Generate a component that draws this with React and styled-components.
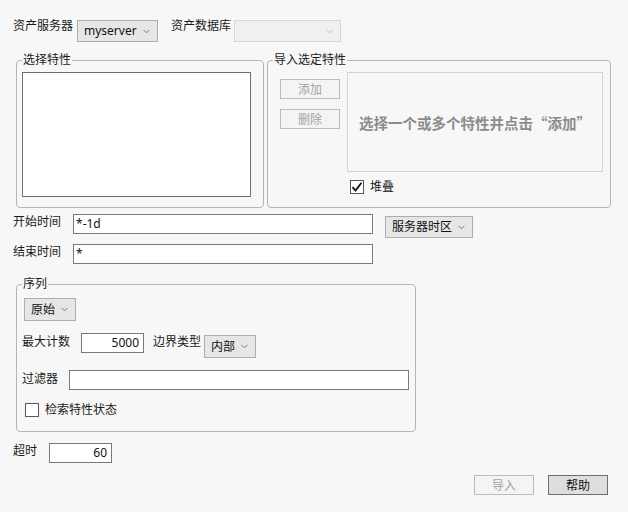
import styled, { createGlobalStyle, css } from "styled-components"

const Global = createGlobalStyle`
    body {
        margin: 0;
        background: #f7f7f7;
    }
`

const Page = styled.div`
    width: 628px;
    height: 512px;
    box-sizing: border-box;
    padding: 18px 0 0 13px;
    background: #f7f7f7;
    font-family: "Noto Sans", "Noto Sans CJK SC", sans-serif;
    font-size: 12px;
    color: #1a1a1a;
    display: flex;
    flex-direction: column;
`

const Row = styled.div`
    display: flex;
    align-items: ${(p) => (p.$stretch ? "stretch" : "flex-start")};
    margin-top: ${(p) => p.$mt || 0}px;
    margin-left: ${(p) => p.$ml || 0}px;
`

const Label = styled.span`
    line-height: 16px;
    white-space: nowrap;
    margin-top: ${(p) => p.$mt || 0}px;
    margin-right: ${(p) => p.$gap || 0}px;
`

const DropBox = styled.div`
    box-sizing: border-box;
    width: ${(p) => p.$w}px;
    height: ${(p) => p.$h || 22}px;
    margin-top: ${(p) => p.$mt || 0}px;
    margin-left: ${(p) => p.$ml || 0}px;
    padding: 0 7px 0 6px;
    display: flex;
    align-items: center;
    justify-content: space-between;
    border: 1px solid #adadad;
    background: #e6e6e6;
    color: #111;
    line-height: 16px;

    ${(p) => p.$disabled && css`
        border-color: #d6d6d6;
        background: #f0f0f0;
    `}
`

const Chevron = ({ color = "#7a7a7a" }) => (
    <svg width="7" height="5" viewBox="0 0 7 5">
        <path d="M0.5 0.8 L3.5 3.8 L6.5 0.8" fill="none" stroke={color} strokeWidth="1" />
    </svg>
)

const Dropdown = ({ text, disabled, ...rest }) => (
    <DropBox $disabled={disabled} {...rest}>
        <span>{text}</span>
        <Chevron color={disabled ? "#c4c4c4" : "#7a7a7a"} />
    </DropBox>
)

const Group = styled.fieldset`
    box-sizing: border-box;
    margin: 0;
    margin-left: ${(p) => p.$ml || 0}px;
    width: ${(p) => p.$w}px;
    border: 1px solid #b6b6b6;
    border-radius: 4px;
    padding: ${(p) => p.$pt || 4}px ${(p) => p.$pr || 5}px ${(p) => p.$pb || 10}px 5px;
    min-width: 0;

    > legend {
        padding: 0 1px;
        line-height: 16px;
        color: #1a1a1a;
    }
`

const ListBox = styled.div`
    box-sizing: border-box;
    width: 229px;
    height: 125px;
    background: #fff;
    border: 1px solid #6f6f6f;
`

const Field = styled.div`
    box-sizing: border-box;
    width: ${(p) => p.$w}px;
    height: 20px;
    background: #fff;
    border: 1px solid #7a7a7a;
    padding: 0 ${(p) => (p.$right ? 4 : 2)}px;
    text-align: ${(p) => (p.$right ? "right" : "left")};
    line-height: 17px;
    color: #111;
`

const SmallButton = styled.div`
    box-sizing: border-box;
    width: 60px;
    height: 20px;
    display: flex;
    align-items: center;
    justify-content: center;
    border: 1px solid #bdbdbd;
    background: #f4f4f4;
    color: #a3a3a3;

    ${(p) => p.$primary && css`
        border-color: #6e6e6e;
        background: #dedede;
        color: #111;
    `}
`

const ButtonColumn = styled.div`
    display: flex;
    flex-direction: column;
    gap: 10px;
    margin: 7px 7px 0 7px;
`

const RightColumn = styled.div`
    display: flex;
    flex-direction: column;
`

const InfoBox = styled.div`
    box-sizing: border-box;
    width: 256px;
    height: 100px;
    border: 1px solid #d3d3d3;
    display: flex;
    align-items: center;
    justify-content: center;
    font-size: 14.5px;
    font-weight: bold;
    color: #8c8c8c;
    font-family: "Noto Sans CJK SC", sans-serif;
    white-space: nowrap;
`

const CheckRow = styled.label`
    display: flex;
    align-items: center;
    gap: 6px;
    margin-top: ${(p) => p.$mt || 0}px;
    margin-left: ${(p) => p.$ml || 0}px;
    line-height: 16px;
`

const Box = styled.span`
    box-sizing: border-box;
    width: 14px;
    height: 14px;
    background: #fff;
    border: 1px solid #555;
    display: flex;
    align-items: center;
    justify-content: center;
`

const Check = ({ checked }) => (
    <Box>
        {checked && (
            <svg width="12" height="12" viewBox="0 0 12 12">
                <path d="M1.5 6.2 L4.5 9.5 L10.5 1.8" fill="none" stroke="#111" strokeWidth="1.8" />
            </svg>
        )}
    </Box>
)

const Footer = styled.div`
    display: flex;
    justify-content: flex-end;
    gap: 14px;
    margin-top: 12px;
    padding-right: 20px;
`

export default function App() {
    return (
        <Page>
            <Global />
            <Row>
                <Label $gap={4}>资产服务器</Label>
                <Dropdown text="myserver" $w={81} $mt={2} />
                <Label $gap={3} style={{ marginLeft: 13 }}>资产数据库</Label>
                <Dropdown text="" disabled $w={107} $mt={2} />
            </Row>

            <Row $mt={10} $ml={3} $stretch>
                <Group $w={248}>
                    <legend>选择特性</legend>
                    <ListBox />
                </Group>
                <Group $w={344} $ml={3} $pt={0} $pr={6}>
                    <legend>导入选定特性</legend>
                    <Row>
                        <ButtonColumn>
                            <SmallButton>添加</SmallButton>
                            <SmallButton>删除</SmallButton>
                        </ButtonColumn>
                        <RightColumn>
                            <InfoBox>选择一个或多个特性并点击“添加”</InfoBox>
                            <CheckRow $mt={7} $ml={3}>
                                <Check checked />
                                <span>堆叠</span>
                            </CheckRow>
                        </RightColumn>
                    </Row>
                </Group>
            </Row>

            <Row $mt={6}>
                <Label $gap={12}>开始时间</Label>
                <Field $w={300}>*-1d</Field>
                <Dropdown text="服务器时区" $w={88} $mt={2} $ml={12} />
            </Row>
            <Row $mt={6}>
                <Label $gap={12}>结束时间</Label>
                <Field $w={300}>*</Field>
            </Row>

            <Row $mt={12} $ml={3}>
                <Group $w={400} $pt={6} $pb={13} $pr={5}>
                    <legend>序列</legend>
                    <Dropdown text="原始" $w={52} $h={23} $ml={2} />
                    <Row $mt={12}>
                        <Label $mt={1} $gap={11}>最大计数</Label>
                        <Field $w={63} $right>5000</Field>
                        <Label $mt={1} $gap={3} style={{ marginLeft: 9 }}>边界类型</Label>
                        <Dropdown text="内部" $w={52} $h={23} $mt={2} />
                    </Row>
                    <Row $mt={12}>
                        <Label $mt={1} $gap={11}>过滤器</Label>
                        <Field $w={340} />
                    </Row>
                    <CheckRow $mt={12} $ml={3}>
                        <Check />
                        <span>检索特性状态</span>
                    </CheckRow>
                </Group>
            </Row>

            <Row $mt={11}>
                <Label $gap={12}>超时</Label>
                <Field $w={63} $right>60</Field>
            </Row>

            <Footer>
                <SmallButton>导入</SmallButton>
                <SmallButton $primary>帮助</SmallButton>
            </Footer>
        </Page>
    )
}
